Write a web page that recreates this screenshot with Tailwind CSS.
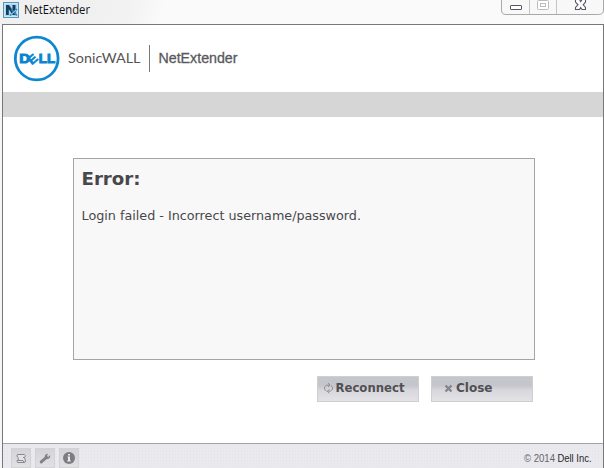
<!DOCTYPE html>
<html lang="en">
<head>
<meta charset="utf-8">
<title>NetExtender</title>
<script src="https://cdn.jsdelivr.net/npm/@tailwindcss/browser@4"></script>
</head>
<body class="w-[604px] h-[468px] overflow-hidden flex flex-col bg-[#f5f5f5] font-['DejaVu_Sans',sans-serif]">
  <div class="h-6 shrink-0 flex items-start justify-between bg-linear-105 from-[#f0f0f0] from-15% via-[#f3f3f3] via-22% to-[#fafafa] to-27%">
    <div class="flex items-start pl-[3px] pt-[2px]">
      <svg class="w-4 h-4 shrink-0" viewBox="0 0 16 16">
        <rect x=".5" y=".5" width="15" height="15" fill="#a9d5ee" stroke="#5597bb"/>
        <rect x="1.5" y="1.5" width="13" height="13" fill="none" stroke="#c9e7f6"/>
        <path d="M3 3H6L9.5 8V3H12.5V13H9.8L5.8 7.3V13H3Z" fill="#173e60"/>
        <path d="M7 13.5L14 7M8.5 7.5L14 13.5" stroke="#3488b8" stroke-width="1.6"/>
        <path d="M8 12.5L13 8" stroke="#d3effb" stroke-width=".7"/>
      </svg>
      <svg class="w-[70px] h-4 ml-[5px]" viewBox="0 0 70 16"><text x="0" y="12" font-family="Open Sans, sans-serif" font-size="12" textLength="66" lengthAdjust="spacingAndGlyphs" fill="#111">NetExtender</text></svg>
    </div>
    <svg class="w-[104px] h-4" viewBox="0 0 104 16">
      <path d="M1.5 -1V10Q1.5 14.5 6 14.5H98.5Q103.5 14.5 103.5 10V-1" fill="#f8f8f8" stroke="#a9a9ab"/>
      <path d="M29.5 0V14M56.5 0V14" stroke="#c4c4c6"/>
      <rect x="10.5" y="5.5" width="11" height="4" rx=".5" fill="#fff" stroke="#55566a"/>
      <rect x="37.5" y=".5" width="11" height="9" rx="1" fill="#fff" stroke="#bcbcbe"/>
      <rect x="40.5" y="3.5" width="5" height="3" fill="#fff" stroke="#bcbcbe"/>
      <path d="M75.5 -.5H79.5L80.700 1.700L82 -.5H85.500V2L83.200 4.800L85.500 7.500V9.500H82L80.700 7.500L79.500 9.500H75.500V7.500L78 4.800L75.500 2Z" fill="#fff" stroke="#55566a" stroke-width="1.100"/>
    </svg>
  </div>
  <div class="ml-[2px] grow min-h-0 flex flex-col border border-b-0 border-[#787878] bg-white">
    <div class="h-[67px] shrink-0 flex">
      <svg class="w-[240px] h-[67px]" viewBox="3 25 240 67">
        <circle cx="36.700" cy="58.500" r="21.400" fill="#fff" stroke="#0d87cf" stroke-width="2.800"/>
        <g fill="#0885ce" stroke="#0885ce" font-family="Liberation Sans, Arial, sans-serif" font-weight="700" font-size="13">
          <text x="19.300" y="63" textLength="10.800" lengthAdjust="spacingAndGlyphs" stroke-width="1">D</text>
          <text transform="translate(31.700 65.200) rotate(-40)" x="0" y="0" font-size="12" textLength="9" lengthAdjust="spacingAndGlyphs" stroke-width=".6">E</text>
          <text x="38.800" y="63" textLength="16.400" lengthAdjust="spacingAndGlyphs" stroke-width="1">LL</text>
        </g>
        <text x="68" y="63" font-family="Lato, sans-serif" font-size="14" textLength="72.500" lengthAdjust="spacingAndGlyphs" fill="#555">SonicWALL</text>
        <path d="M149.500 45V72" stroke="#77787b"/>
        <text x="158.500" y="63" font-family="Liberation Sans, Arial, sans-serif" font-size="14" textLength="79" lengthAdjust="spacingAndGlyphs" fill="#58595b" stroke="#58595b" stroke-width=".3">NetExtender</text>
      </svg>
    </div>
    <div class="h-[25px] shrink-0 bg-[#d6d6d6]"></div>
    <div class="grow flex flex-col pl-[70px] pt-[41px]">
      <div class="w-[462px] h-[202px] border border-[#a5a5a5] bg-[#f8f8f8] text-[#48484b]">
        <svg class="block w-[460px] h-[80px]" viewBox="74 159 460 80" font-family="DejaVu Sans, sans-serif" fill="#48484b">
          <text x="81.500" y="185" font-size="18" font-weight="700" textLength="59" lengthAdjust="spacingAndGlyphs">Error:</text>
          <text x="81.500" y="220" font-size="13" textLength="279.500" lengthAdjust="spacingAndGlyphs">Login failed - Incorrect username/password.</text>
        </svg>
      </div>
      <div class="mt-4 ml-[244px] flex gap-3">
        <button class="w-[102px] h-[26px] border border-[#cfcfd2] bg-linear-to-b from-[#c5c5cc] from-35% via-[#d7d7dc] via-55% to-[#e3e2e7]">
          <svg class="block w-[100px] h-6" viewBox="318 377 100 24">
            <path d="M326.500 391Q323.800 390 324.500 387Q325.500 384.800 329.500 385M328 383L330 385L328 387M331 385.800Q333.500 387 332.500 389.500Q331.300 391.500 327.500 391.300M329.300 389.300L327.300 391.300L329.300 393.300" fill="none" stroke="#88888c" stroke-width=".9"/>
            <text x="335.500" y="392" font-family="DejaVu Sans, sans-serif" font-weight="700" font-size="12.500" textLength="69" lengthAdjust="spacingAndGlyphs" fill="#505053">Reconnect</text>
          </svg>
        </button>
        <button class="w-[102px] h-[26px] border border-[#cfcfd2] bg-linear-to-b from-[#c5c5cc] from-35% via-[#d7d7dc] via-55% to-[#e3e2e7]">
          <svg class="block w-[100px] h-6" viewBox="432 377 100 24">
            <path d="M445.500 385.500L451.500 391.500M451.500 385.500L445.500 391.500" stroke="#858589" stroke-width="2.300"/>
            <text x="456" y="392" font-family="DejaVu Sans, sans-serif" font-weight="700" font-size="12.500" textLength="36.500" lengthAdjust="spacingAndGlyphs" fill="#505053">Close</text>
          </svg>
        </button>
      </div>
    </div>
    <div class="h-[25px] shrink-0 flex justify-between border-t border-[#a2a2a4] bg-[#e9e9ee] bg-[radial-gradient(#e3e3e9_0.7px,transparent_0.8px)] bg-size-[3px_3px] pl-2 pt-1">
      <div class="flex gap-1">
        <div class="w-5 h-5 border border-[#d3d3d4] bg-linear-to-b from-[#d3d3d8] to-[#e0e0e5]">
          <svg class="block w-[18px] h-[19px]" viewBox="0 0 18 19"><path d="M5.500 5.500H12.500Q14.500 6.500 12.500 8.500L13.500 12Q13.500 13.500 12 13.500H6Q4.500 13 5 11.500H6.500L6 8.500Q4 7 5.500 5.500ZM11 8.500H12.500M6.500 11.500H11L12 13.500" fill="#e4e4e8" stroke="#88888b"/></svg>
        </div>
        <div class="w-5 h-5 border border-[#d3d3d4] bg-linear-to-b from-[#d3d3d8] to-[#e0e0e5]">
          <svg class="block w-[18px] h-[19px]" viewBox="0 0 18 19"><path d="M4 12L8.700 8Q8.500 5 12 4.700L11 7L12.300 8L14 6Q15 10 10.500 10.200L6.200 14Q5.200 15 4.200 14Q3.200 13 4 12Z" fill="#828286"/></svg>
        </div>
        <div class="w-5 h-5 border border-[#d3d3d4] bg-linear-to-b from-[#d3d3d8] to-[#e0e0e5]">
          <svg class="block w-[18px] h-[19px]" viewBox="0 0 18 19"><circle cx="9" cy="9" r="6" fill="#7d7d81"/><path d="M8 5H10V6.500H8ZM7.500 7.500H10V11.500H10.800V12.500H7.200V11.500H8V8.500H7.500Z" fill="#ececf0"/></svg>
        </div>
      </div>
      <svg class="w-[85px] h-5" viewBox="518 448 85 20" font-family="Liberation Sans, Arial, sans-serif" font-size="10">
        <text x="524" y="462" textLength="31" lengthAdjust="spacingAndGlyphs" fill="#666">© 2014</text>
        <text x="557.500" y="462" textLength="34" lengthAdjust="spacingAndGlyphs" fill="#26262c">Dell Inc.</text>
      </svg>
    </div>
  </div>
</body>
</html>
